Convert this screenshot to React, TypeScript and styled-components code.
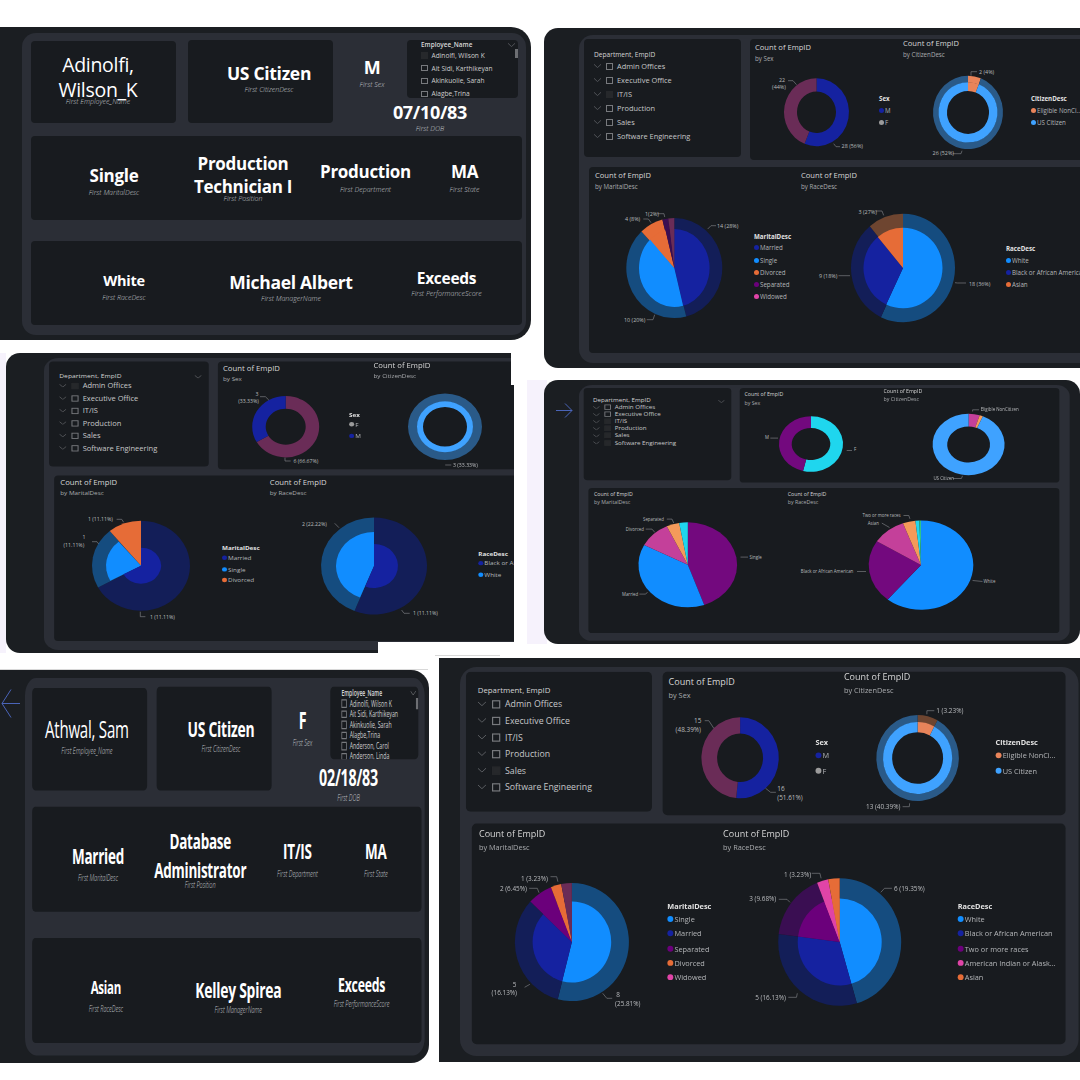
import React from "react";
import styled, { createGlobalStyle } from "styled-components";

const GlobalStyle = createGlobalStyle`
  html, body { margin: 0; padding: 0; background: #fff; }
  * { box-sizing: border-box; }
`;

const FONT = `"Open Sans", "Noto Sans", "Liberation Sans", sans-serif`;

// ---- shared shell -----------------------------------------------------------

const Canvas = styled.div`
  position: relative;
  width: 1080px;
  height: 1080px;
  overflow: hidden;
  background: #fff;
  font-family: ${FONT};
`;

// every screenshot is a window pinned on the collage
const Shot = styled.section<{ $x: number; $y: number; $w: number; $h: number; $corners: string }>`
  position: absolute;
  left: ${(p) => p.$x}px;
  top: ${(p) => p.$y}px;
  width: ${(p) => p.$w}px;
  height: ${(p) => p.$h}px;
  display: flex;
  align-items: flex-start;
  overflow: hidden;
  background: #1b1e22;
  border-radius: ${(p) => p.$corners};
`;

const Gutter = styled.div<{ $w: number; $top: number; $arrowTop?: number; $arrowLeft?: number }>`
  flex: none;
  width: ${(p) => p.$w}px;
  margin-top: ${(p) => p.$top}px;
  padding-top: ${(p) => p.$arrowTop ?? 0}px;
  padding-left: ${(p) => p.$arrowLeft ?? 0}px;
  svg { display: block; }
`;

// the captures were stretched unevenly, so the page keeps one base size and is scaled
const ScaledPage = styled.div<{ $w: number; $h: number; $sx: number; $sy: number; $top: number }>`
  flex: none;
  width: ${(p) => p.$w}px;
  height: ${(p) => p.$h}px;
  margin-top: ${(p) => p.$top}px;
  background: #2b2e36;
  border-radius: 14px;
  transform-origin: 0 0;
  transform: scale(${(p) => p.$sx}, ${(p) => p.$sy});
`;

const Patch = styled.div<{ $x: number; $y: number; $w: number; $h: number; $c: string }>`
  position: absolute;
  left: ${(p) => p.$x}px;
  top: ${(p) => p.$y}px;
  width: ${(p) => p.$w}px;
  height: ${(p) => p.$h}px;
  background: ${(p) => p.$c};
`;

const Card = styled.div`
  background: #181b1f;
  border-radius: 4px;
`;

const Chevron = () => (
  <svg width="7" height="4" viewBox="0 0 7 4" fill="none" stroke="#77797d" strokeWidth="0.6">
    <path d="M0 0.3L3.5 3.6L7 0.3" />
  </svg>
);

const Tick = styled.span<{ $filled?: boolean; $size: number }>`
  flex: none;
  width: ${(p) => p.$size}px;
  height: ${(p) => p.$size}px;
  border: 0.6px solid ${(p) => (p.$filled ? "#26282b" : "#77797d")};
  background: ${(p) => (p.$filled ? "#26282b" : "transparent")};
`;

// ---- employee page ----------------------------------------------------------

const EmpColumn = styled.div`
  padding: 8px 4px 0 9px;
`;

const TopRow = styled.div`
  display: flex;
  height: 95px;
`;

const TopCard = styled(Card)<{ $raise?: boolean; $gap?: number }>`
  flex: none;
  width: 145px;
  height: ${(p) => (p.$raise ? 83 : 82)}px;
  margin-top: ${(p) => (p.$raise ? -1 : 0)}px;
  margin-left: ${(p) => p.$gap ?? 0}px;
`;

const KpiRow = styled.div<{ $columns: string }>`
  display: grid;
  grid-template-columns: ${(p) => p.$columns};
  height: 100%;
`;

const KpiCell = styled.div<{ $top: number }>`
  display: flex;
  flex-direction: column;
  align-items: center;
  min-width: 0;
  padding-top: ${(p) => p.$top}px;
`;

const KpiValue = styled.div<{ $size: number; $lh: number; $weight: number }>`
  color: #fff;
  font-size: ${(p) => p.$size}px;
  line-height: ${(p) => p.$lh}px;
  font-weight: ${(p) => p.$weight};
  letter-spacing: -0.3px;
  text-align: center;
  white-space: nowrap;
`;

const KpiLabel = styled.div<{ $gap: number }>`
  margin-top: ${(p) => p.$gap}px;
  color: #c4c7cc;
  font-size: 7px;
  line-height: 9px;
  font-style: italic;
  font-weight: 300;
  white-space: nowrap;
`;

const SideBlock = styled.div`
  flex: none;
  width: 189px;
  margin-top: -1px;
`;

const SideTop = styled.div`
  display: flex;
  height: 58px;
`;

const SexCell = styled.div`
  flex: none;
  width: 54px;
  margin: 0 8px 0 12px;
`;

const EmpSlicer = styled(Card)`
  position: relative;
  flex: none;
  width: 111px;
  height: 58px;
  overflow: hidden;
  padding: 1px 0 0 14px;
`;

const EmpSlicerTitle = styled.div`
  color: #d8d8d8;
  font-size: 6.4px;
  line-height: 8px;
  font-weight: 600;
`;

const EmpSlicerRow = styled.div<{ $h: number }>`
  display: flex;
  align-items: center;
  gap: 4px;
  height: ${(p) => p.$h}px;
  color: #cfcfcf;
  font-size: 6.6px;
  white-space: nowrap;
`;

const EmpScrollThumb = styled.div`
  position: absolute;
  right: 0;
  top: 9px;
  width: 3px;
  height: 9px;
  background: #6d6f73;
`;

const EmpSlicerChevron = styled.div`
  position: absolute;
  right: 3px;
  top: 1px;
  line-height: 0;
`;

const DateCell = styled.div`
  width: 194px;
  margin-top: 3px;
`;

const WideCard = styled(Card)<{ $mt: number }>`
  width: 491px;
  height: 84px;
  margin-top: ${(p) => p.$mt}px;
`;

type Kpi = {
  lines: string[];
  label: string;
  center?: number;
  top: number;
  size?: number;
  lh?: number;
  weight?: number;
  gap: number;
};

const columnsFromCenters = (centers: number[]) => {
  let end = 0;
  return centers
    .map((c) => {
      const w = (c - end) * 2;
      end += w;
      return `${w}px`;
    })
    .join(" ");
};

const KpiBlock = ({ k }: { k: Kpi }) => (
  <KpiCell $top={k.top}>
    <KpiValue $size={k.size ?? 17} $lh={k.lh ?? 22} $weight={k.weight ?? 700}>
      {k.lines.map((l) => (
        <div key={l}>{l}</div>
      ))}
    </KpiValue>
    <KpiLabel $gap={k.gap}>{k.label}</KpiLabel>
  </KpiCell>
);

const KpiGroup = ({ items }: { items: Kpi[] }) => (
  <KpiRow $columns={columnsFromCenters(items.map((k) => k.center ?? 0))}>
    {items.map((k) => (
      <KpiBlock key={k.label} k={k} />
    ))}
  </KpiRow>
);

const EMPLOYEES = [
  "Adinolfi, Wilson K",
  "Ait Sidi, Karthikeyan",
  "Akinkuolie, Sarah",
  "Alagbe,Trina",
  "Anderson, Carol",
  "Anderson, Linda",
];

type EmployeeData = {
  name: Kpi;
  citizen: string;
  sex: string;
  dob: string;
  marital: string;
  position: string[];
  dept: string;
  state: string;
  race: string;
  manager: string;
  score: string;
  slicerRow: number;
  firstFilled?: boolean;
};

const EmployeePage = ({ d }: { d: EmployeeData }) => (
  <EmpColumn>
    <TopRow>
      <TopCard>
        <KpiGroup items={[d.name]} />
      </TopCard>
      <TopCard $raise $gap={12}>
        <KpiGroup items={[{ lines: [d.citizen], label: "First CitizenDesc", center: 81, top: 22, size: 17.5, gap: 1 }]} />
      </TopCard>
      <SideBlock>
        <SideTop>
          <SexCell>
            <KpiBlock k={{ lines: [d.sex], label: "First Sex", top: 16, size: 18, gap: 1.5 }} />
          </SexCell>
          <EmpSlicer>
            <EmpSlicerTitle>Employee_Name</EmpSlicerTitle>
            {EMPLOYEES.map((name, i) => (
              <EmpSlicerRow key={name} $h={d.slicerRow}>
                <Tick $size={6.5} $filled={d.firstFilled && i === 0} />
                {name}
              </EmpSlicerRow>
            ))}
            <EmpSlicerChevron>
              <Chevron />
            </EmpSlicerChevron>
            <EmpScrollThumb />
          </EmpSlicer>
        </SideTop>
        <DateCell>
          <KpiBlock k={{ lines: [d.dob], label: "First DOB", top: 0, size: 18, gap: 1 }} />
        </DateCell>
      </SideBlock>
    </TopRow>
    <WideCard $mt={0}>
      <KpiGroup
        items={[
          { lines: [d.marital], label: "First MaritalDesc", center: 83, top: 29, gap: 1 },
          { lines: d.position, label: "First Position", center: 212, top: 16, lh: 23, gap: -4 },
          { lines: [d.dept], label: "First Department", center: 334.5, top: 25, gap: 1.5 },
          { lines: [d.state], label: "First State", center: 433.5, top: 25, gap: 1.5 },
        ]}
      />
    </WideCard>
    <WideCard $mt={21}>
      <KpiGroup
        items={[
          { lines: [d.race], label: "First RaceDesc", center: 93, top: 30, size: 14.5, lh: 20, gap: 1.5 },
          { lines: [d.manager], label: "First ManagerName", center: 260, top: 29.5, size: 17.5, gap: 1.8 },
          { lines: [d.score], label: "First PerformanceScore", center: 415.5, top: 27, size: 15.5, lh: 20, gap: 1.2 },
        ]}
      />
    </WideCard>
  </EmpColumn>
);

const WILSON: EmployeeData = {
  name: { lines: ["Adinolfi,", "Wilson_K"], label: "First Employee_Name", center: 67, top: 10.5, size: 19.5, lh: 25, weight: 400, gap: -5 },
  citizen: "US Citizen",
  sex: "M",
  dob: "07/10/83",
  marital: "Single",
  position: ["Production", "Technician I"],
  dept: "Production",
  state: "MA",
  race: "White",
  manager: "Michael Albert",
  score: "Exceeds",
  slicerRow: 12.8,
  firstFilled: true,
};

const SAM: EmployeeData = {
  name: { lines: ["Athwal, Sam"], label: "First Employee_Name", center: 69, top: 21, size: 19, lh: 25, weight: 400, gap: 0 },
  citizen: "US Citizen",
  sex: "F",
  dob: "02/18/83",
  marital: "Married",
  position: ["Database", "Administrator"],
  dept: "IT/IS",
  state: "MA",
  race: "Asian",
  manager: "Kelley Spirea",
  score: "Exceeds",
  slicerRow: 8.5,
};

// ---- chart page -------------------------------------------------------------

const C = {
  blue: "#1522a0",
  blueDim: "#131e58",
  sky: "#118dff",
  skyDim: "#154c7f",
  orange: "#e66c37",
  purple: "#6b007b",
  purpleDim: "#3a0e52",
  plum: "#6a2c57",
  pink: "#e044a7",
  peach: "#e8845a",
  brown: "#6e4530",
  ring: "#2a5a88",
  ringIn: "#3fa2ff",
  grey: "#9b9b9b",
  cyan: "#1fd6ee",
  vivid: "#73097e",
  rose: "#c4409a",
  apricot: "#f49a5a",
};

type Ring = { rx: number; ry: number; hx?: number; hy?: number; slices: [number, string | null][] };
type Note = { text: string; x: number; y: number; line?: string; anchor?: "middle" };
type Drawing = { cx: number; cy: number; rings: Ring[]; notes: Note[] };
type LegendData = { title: string; items: [string, string][] };
type Chart = { sub: string; drawing: Drawing; legend?: LegendData; svgW?: number };

type ChartPageData = {
  ox: number;
  oy: number;
  sx: number;
  sy: number;
  titleSize: number;
  subSize: number;
  noteSize: number;
  rowH: number;
  itemSize: number;
  filled: number[];
  headChevron?: boolean;
  sex: Chart;
  citizen: Chart;
  marital: Chart;
  race: Chart;
};

const polar = (cx: number, cy: number, rx: number, ry: number, turn: number) => {
  const a = turn * Math.PI * 2;
  return `${(cx + rx * Math.sin(a)).toFixed(2)} ${(cy - ry * Math.cos(a)).toFixed(2)}`;
};

const slicePath = (cx: number, cy: number, r: Ring, a0: number, a1: number): string => {
  // arcs stay below half a turn so the small-arc flag holds
  if (a1 - a0 > 0.45) {
    const mid = (a0 + a1) / 2;
    return slicePath(cx, cy, r, a0, mid) + slicePath(cx, cy, r, mid, a1);
  }
  const hx = r.hx ?? 0;
  const hy = r.hy ?? 0;
  const outer = `M${polar(cx, cy, r.rx, r.ry, a0)}A${r.rx} ${r.ry} 0 0 1 ${polar(cx, cy, r.rx, r.ry, a1)}`;
  if (!hx) return `${outer}L${cx} ${cy}Z`;
  return `${outer}L${polar(cx, cy, hx, hy, a1)}A${hx} ${hy} 0 0 0 ${polar(cx, cy, hx, hy, a0)}Z`;
};

// the drawing is written in picture coordinates: the viewBox undoes the page scale
const PieDrawing = ({ d, box, size }: { d: Drawing; box: number[]; size: number }) => (
  <PieSvg
    $w={box[4]}
    $h={box[5]}
    viewBox={`${box[0]} ${box[1]} ${box[2]} ${box[3]}`}
    preserveAspectRatio="none"
  >
    {d.rings.map((r, i) => {
      let at = 0;
      return (
        <g key={i}>
          {r.slices.map(([f, color], j) => {
            const a0 = at;
            at += f;
            return color ? <path key={j} d={slicePath(d.cx, d.cy, r, a0, at)} fill={color} /> : null;
          })}
        </g>
      );
    })}
    {d.notes.map((n) => (
      <g key={n.text + n.x}>
        {n.line && <path d={n.line} fill="none" stroke="#8a8c90" strokeWidth="0.6" />}
        <text x={n.x} y={n.y} fontSize={size} fill="#b9bbbe" dominantBaseline="central" textAnchor={n.anchor ?? "start"}>
          {n.text}
        </text>
      </g>
    ))}
  </PieSvg>
);

const PieSvg = styled.svg<{ $w: number; $h: number }>`
  flex: none;
  display: block;
  overflow: visible;
  width: ${(p) => p.$w}px;
  height: ${(p) => p.$h}px;
  font-family: ${FONT};
`;

const ChartsColumn = styled.div`
  padding: 4px 0 0 5px;
`;

const ChartsTop = styled.div`
  display: flex;
  gap: 9px;
`;

const DeptSlicer = styled(Card)`
  position: relative;
  flex: none;
  width: 157px;
  height: 118px;
  padding: 11px 0 0 10px;
`;

const DeptTitle = styled.div`
  color: #d4d4d4;
  font-size: 6.6px;
  line-height: 9px;
`;

const DeptRow = styled.div<{ $h: number; $size: number }>`
  display: flex;
  align-items: center;
  height: ${(p) => p.$h}px;
  color: #c6c7c9;
  font-size: ${(p) => p.$size}px;
  white-space: nowrap;
`;

const RowChevron = styled.span`
  flex: none;
  display: flex;
  width: 12px;
`;

const RowText = styled.span`
  margin-left: 4px;
`;

const DeptHeadChevron = styled.div`
  position: absolute;
  right: 7px;
  top: 13px;
  line-height: 0;
`;

const ChartCard = styled(Card)<{ $w: number; $h: number; $pad: number; $ml?: number; $mt?: number }>`
  flex: none;
  display: flex;
  width: ${(p) => p.$w}px;
  height: ${(p) => p.$h}px;
  padding-left: ${(p) => p.$pad}px;
  margin-left: ${(p) => p.$ml ?? 0}px;
  margin-top: ${(p) => p.$mt ?? 0}px;
`;

const ChartBlock = styled.div<{ $w: number }>`
  flex: none;
  width: ${(p) => p.$w}px;
`;

const ChartHead = styled.div<{ $h: number; $raised?: boolean }>`
  height: ${(p) => p.$h}px;
  padding-top: ${(p) => (p.$raised ? 0 : 4)}px;
`;

const ChartTitle = styled.div<{ $size: number }>`
  color: #d6d6d6;
  font-size: ${(p) => p.$size}px;
  line-height: 9px;
  white-space: nowrap;
`;

const ChartSub = styled.div<{ $size: number }>`
  margin-top: 2px;
  color: #a9abae;
  font-size: ${(p) => p.$size}px;
  line-height: 9px;
  white-space: nowrap;
`;

const ChartBody = styled.div<{ $h: number }>`
  display: flex;
  height: ${(p) => p.$h}px;
`;

const Legend = styled.div`
  flex: none;
  align-self: center;
`;

const LegendTitle = styled.div`
  color: #e2e2e2;
  font-size: 6.2px;
  line-height: 10px;
  font-weight: 700;
  white-space: nowrap;
`;

const LegendRow = styled.div`
  display: flex;
  align-items: center;
  gap: 1px;
  height: 12.2px;
  color: #b4b6b9;
  font-size: 6.2px;
  white-space: nowrap;
`;

const LegendDot = styled.span<{ $c: string }>`
  flex: none;
  width: 5px;
  height: 5px;
  border-radius: 50%;
  background: ${(p) => p.$c};
`;

const DEPARTMENTS = ["Admin Offices", "Executive Office", "IT/IS", "Production", "Sales", "Software Engineering"];

const BASE_X = 579;
const BASE_Y = 36;

const ChartUnit = ({
  c,
  p,
  rect,
  raised,
  headH,
  w,
}: {
  c: Chart;
  p: ChartPageData;
  rect: [number, number, number, number];
  raised?: boolean;
  headH: number;
  w: number;
}) => {
  const svgW = c.svgW ?? rect[2];
  const box = [
    p.ox + (rect[0] - BASE_X) * p.sx,
    p.oy + (rect[1] - BASE_Y) * p.sy,
    svgW * p.sx,
    rect[3] * p.sy,
    svgW,
    rect[3],
  ];
  return (
    <ChartBlock $w={w}>
      <ChartHead $h={headH} $raised={raised}>
        <ChartTitle $size={p.titleSize}>Count of EmpID</ChartTitle>
        <ChartSub $size={p.subSize}>{c.sub}</ChartSub>
      </ChartHead>
      <ChartBody $h={rect[3]}>
        <PieDrawing d={c.drawing} box={box} size={p.noteSize} />
        {c.legend && (
          <Legend>
            <LegendTitle>{c.legend.title}</LegendTitle>
            {c.legend.items.map(([label, color]) => (
              <LegendRow key={label}>
                <LegendDot $c={color} />
                {label}
              </LegendRow>
            ))}
          </Legend>
        )}
      </ChartBody>
    </ChartBlock>
  );
};

const ChartsPage = ({ p }: { p: ChartPageData }) => (
  <ChartsColumn>
    <ChartsTop>
      <DeptSlicer>
        <DeptTitle>Department, EmpID</DeptTitle>
        {DEPARTMENTS.map((name, i) => (
          <DeptRow key={name} $h={p.rowH} $size={p.itemSize}>
            <RowChevron>
              <Chevron />
            </RowChevron>
            <Tick $size={7} $filled={p.filled.includes(i)} />
            <RowText>{name}</RowText>
          </DeptRow>
        ))}
        {p.headChevron && (
          <DeptHeadChevron>
            <Chevron />
          </DeptHeadChevron>
        )}
      </DeptSlicer>
      <ChartCard $w={340} $h={121} $pad={5}>
        <ChartUnit c={p.sex} p={p} rect={[755, 68, 124, 88]} headH={28} w={148} />
        <ChartUnit c={p.citizen} p={p} rect={[903, 68, 128, 88]} headH={28} w={187} raised />
      </ChartCard>
    </ChartsTop>
    <ChartCard $w={501} $h={186} $pad={6} $ml={5} $mt={7}>
      <ChartUnit c={p.marital} p={p} rect={[595, 194, 159, 148]} headH={26} w={206} />
      <ChartUnit c={p.race} p={p} rect={[801, 194, 205, 148]} headH={26} w={289} />
    </ChartCard>
  </ChartsColumn>
);

const PANEL_TOP_RIGHT: ChartPageData = {
  ox: 579,
  oy: 35.3,
  sx: 1,
  sy: 1,
  titleSize: 7.6,
  subSize: 6.2,
  noteSize: 5.4,
  rowH: 14,
  itemSize: 7.4,
  filled: [2],
  sex: {
    sub: "by Sex",
    drawing: {
      cx: 816.5,
      cy: 112.5,
      rings: [{ rx: 32.5, ry: 34, hx: 19.5, hy: 20.8, slices: [[0.56, C.blue], [0.44, C.plum]] }],
      notes: [
        { text: "22", x: 782, y: 80, anchor: "middle" },
        { text: "(44%)", x: 779, y: 87, anchor: "middle", line: "M788 81H793L796.5 85" },
        { text: "28 (56%)", x: 841.6, y: 146.7, line: "M833.7 144L836 147H840" },
      ],
    },
    legend: { title: "Sex", items: [["M", C.blue], ["F", C.grey]] },
  },
  citizen: {
    sub: "by CitizenDesc",
    drawing: {
      cx: 968,
      cy: 112.7,
      rings: [
        { rx: 35, ry: 36.7, hx: 29.3, hy: 30, slices: [[0.06, C.peach], [0.94, C.ring]] },
        { rx: 29.5, ry: 30.2, hx: 21, hy: 21.5, slices: [[0.06, C.peach], [0.94, C.ringIn]] },
      ],
      notes: [
        { text: "2 (4%)", x: 979, y: 72, line: "M971 76V72H977" },
        { text: "26 (52%)", x: 932.6, y: 153.7, line: "M953 154H961L962 151" },
      ],
    },
    legend: { title: "CitizenDesc", items: [["Eligible NonCi...", C.peach], ["US Citizen", C.ringIn]] },
  },
  marital: {
    sub: "by MaritalDesc",
    drawing: {
      cx: 674.3,
      cy: 268.3,
      rings: [
        { rx: 48, ry: 50, slices: [[0.46, C.blueDim], [0.42, C.skyDim], [0.08, C.orange], [0.02, C.purpleDim], [0.02, C.plum]] },
        { rx: 35.3, ry: 39, slices: [[0.46, C.blue], [0.42, C.sky], [0.08, C.orange], [0.02, C.purpleDim], [0.02, C.plum]] },
      ],
      notes: [
        { text: "14 (28%)", x: 717, y: 226.7, line: "M707.7 229.3L711 226H716" },
        { text: "10 (20%)", x: 624, y: 320, line: "M654.7 315L653 320H646.7" },
        { text: "4 (8%)", x: 625, y: 219, line: "M643.3 219.3H648.4L651 223" },
        { text: "1(2%)", x: 645, y: 214, line: "M657 214H664L664.7 217.3" },
      ],
    },
    legend: {
      title: "MaritalDesc",
      items: [["Married", C.blue], ["Single", C.sky], ["Divorced", C.orange], ["Separated", C.purple], ["Widowed", C.pink]],
    },
  },
  race: {
    sub: "by RaceDesc",
    drawing: {
      cx: 903,
      cy: 268.3,
      rings: [
        { rx: 52, ry: 54.3, slices: [[0.57, C.skyDim], [0.32, C.blueDim], [0.11, C.brown]] },
        { rx: 39.5, ry: 40.3, slices: [[0.57, C.sky], [0.32, C.blue], [0.11, C.orange]] },
      ],
      notes: [
        { text: "3 (27%)", x: 858.5, y: 212, line: "M875.7 211.3H882L883.7 215.7" },
        { text: "9 (18%)", x: 819, y: 276, line: "M838.5 276H850" },
        { text: "18 (36%)", x: 969, y: 284, line: "M955 283L957.4 283.3H966" },
      ],
    },
    legend: { title: "RaceDesc", items: [["White", C.sky], ["Black or African American", C.blue], ["Asian", C.orange]] },
  },
};

const PANEL_MID_LEFT: ChartPageData = {
  ox: 44,
  oy: 358,
  sx: 1.017,
  sy: 0.89,
  titleSize: 7.6,
  subSize: 6.2,
  noteSize: 5.2,
  rowH: 14,
  itemSize: 7.4,
  filled: [0],
  headChevron: true,
  sex: {
    sub: "by Sex",
    drawing: {
      cx: 285.7,
      cy: 426.7,
      rings: [{ rx: 33.5, ry: 30.7, hx: 20, hy: 18, slices: [[0.6667, C.plum], [0.3333, C.blue]] }],
      notes: [
        { text: "3", x: 257, y: 394, anchor: "middle" },
        { text: "(33.33%)", x: 248.5, y: 400.7, anchor: "middle", line: "M260 396.7H265.4L268.8 400" },
        { text: "6 (66.67%)", x: 293.4, y: 461, line: "M285 457.7V461H290.7" },
      ],
    },
    legend: { title: "Sex", items: [["F", C.grey], ["M", C.blue]] },
  },
  citizen: {
    sub: "by CitizenDesc",
    drawing: {
      cx: 445,
      cy: 426.7,
      rings: [
        { rx: 37, ry: 33.3, hx: 27.5, hy: 25, slices: [[1, C.ring]] },
        { rx: 28, ry: 25.5, hx: 22, hy: 19.7, slices: [[1, C.ringIn]] },
      ],
      notes: [{ text: "3 (33.33%)", x: 453, y: 465, line: "M445.2 465H451.3" }],
    },
  },
  marital: {
    sub: "by MaritalDesc",
    drawing: {
      cx: 141,
      cy: 565.7,
      rings: [
        { rx: 49, ry: 45, slices: [[0.67, C.blueDim], [0.22, C.skyDim], [0.11, C.orange]] },
        { rx: 35, ry: 31, slices: [[0.67, null], [0.22, C.sky]] },
        { rx: 20, ry: 18, slices: [[0.67, C.blue]] },
      ],
      notes: [
        { text: "1 (11.11%)", x: 88, y: 519, line: "M116.6 519.3H121.7L123.7 522.3" },
        { text: "1", x: 84, y: 536.7, anchor: "middle" },
        { text: "(11.11%)", x: 63.6, y: 545, line: "M92 541.7H97L98.7 544" },
        { text: "1 (11.11%)", x: 150, y: 616.7, line: "M140.3 611.7V616.7H145.4" },
      ],
    },
    legend: { title: "MaritalDesc", items: [["Married", C.blue], ["Single", C.sky], ["Divorced", C.orange]] },
  },
  race: {
    sub: "by RaceDesc",
    drawing: {
      cx: 374,
      cy: 566,
      rings: [
        { rx: 53, ry: 48.5, slices: [[0.56, C.blueDim], [0.44, C.skyDim]] },
        { rx: 38, ry: 34, slices: [[0.56, null], [0.44, C.sky]] },
        { rx: 24, ry: 22, slices: [[0.56, C.blue]] },
      ],
      notes: [
        { text: "2 (22.22%)", x: 302, y: 524, line: "M334.7 523.3L339 527.7" },
        { text: "1 (11.11%)", x: 413, y: 613, line: "M401.6 610L404 613.3H409.7" },
      ],
    },
    legend: { title: "RaceDesc", items: [["Black or African American", C.blue], ["White", C.sky]] },
  },
};

const PANEL_MID_RIGHT: ChartPageData = {
  ox: 579,
  oy: 385.2,
  sx: 0.94,
  sy: 0.78,
  titleSize: 5.6,
  subSize: 5.6,
  noteSize: 4.4,
  rowH: 9.1,
  itemSize: 6.6,
  filled: [2, 3, 4, 5],
  headChevron: true,
  sex: {
    sub: "by Sex",
    drawing: {
      cx: 811,
      cy: 444.2,
      rings: [{ rx: 32, ry: 27.8, hx: 19.3, hy: 16, slices: [[0.54, C.cyan], [0.46, C.vivid]] }],
      notes: [
        { text: "F", x: 854, y: 449.7, line: "M846.7 450.7H852" },
        { text: "M", x: 765, y: 437.7, line: "M770.3 438.3H778" },
      ],
    },
  },
  citizen: {
    sub: "by CitizenDesc",
    drawing: {
      cx: 968.6,
      cy: 444.7,
      rings: [{ rx: 36, ry: 30.7, hx: 21.4, hy: 18, slices: [[0.05, C.rose], [0.015, C.apricot], [0.935, C.ringIn]] }],
      notes: [
        { text: "Eligible NonCitizen", x: 980.7, y: 409.7, line: "M972.6 411.7V410H979" },
        { text: "US Citizen", x: 933.4, y: 478.7, line: "M952.7 478.7H961.4L962.5 476" },
      ],
    },
  },
  marital: {
    sub: "by MaritalDesc",
    drawing: {
      cx: 687.8,
      cy: 565,
      rings: [{ rx: 49.3, ry: 42.5, slices: [[0.446, C.vivid], [0.381, C.sky], [0.103, C.rose], [0.042, C.apricot], [0.028, C.cyan]] }],
      notes: [
        { text: "Single", x: 749.6, y: 557, line: "M740.5 557.3H748" },
        { text: "Married", x: 622, y: 594.7, line: "M639.4 594.3H645.7L647.5 592.3" },
        { text: "Divorced", x: 625.8, y: 529, line: "M645.7 529.3H652L654.9 532.7" },
        { text: "Separated", x: 643, y: 519, line: "M666.8 519.3H672L673.8 523.3" },
      ],
    },
  },
  race: {
    sub: "by RaceDesc",
    drawing: {
      cx: 921,
      cy: 565.3,
      rings: [{ rx: 52.3, ry: 44.7, slices: [[0.61, C.sky], [0.23, C.vivid], [0.104, C.rose], [0.039, C.apricot], [0.012, C.cyan], [0.005, "#2fc48a"]] }],
      notes: [
        { text: "White", x: 983.5, y: 581.7, line: "M972.6 580.7L982.5 581.7" },
        { text: "Black or African American", x: 800.8, y: 571.7, line: "M857 571.7H866" },
        { text: "Asian", x: 867.8, y: 523, line: "M881.8 523.3L889.5 527.7" },
        { text: "Two or more races", x: 862.5, y: 515.7, line: "M903.5 515.7H908.8L909.9 519" },
      ],
    },
  },
};

const PANEL_BOTTOM_RIGHT: ChartPageData = {
  ox: 459.7,
  oy: 667,
  sx: 1.185,
  sy: 1.186,
  titleSize: 7.6,
  subSize: 6.2,
  noteSize: 6.4,
  rowH: 14,
  itemSize: 7.4,
  filled: [4],
  sex: {
    sub: "by Sex",
    drawing: {
      cx: 739.8,
      cy: 757.8,
      rings: [{ rx: 38.7, ry: 40.5, hx: 23, hy: 24.2, slices: [[0.5161, C.blue], [0.4839, C.plum]] }],
      notes: [
        { text: "15", x: 697.4, y: 720.7, anchor: "middle" },
        { text: "(48.39%)", x: 688, y: 729.7, anchor: "middle", line: "M704.4 720.7H708.5L713.5 728.3" },
        { text: "16", x: 777, y: 788 },
        { text: "(51.61%)", x: 777, y: 797.3, line: "M765.3 788.3L770.3 792.3H775.6" },
      ],
    },
    legend: { title: "Sex", items: [["M", C.blue], ["F", C.grey]] },
  },
  citizen: {
    sub: "by CitizenDesc",
    drawing: {
      cx: 917.3,
      cy: 758,
      rings: [
        { rx: 41.3, ry: 43, hx: 34.4, hy: 35.8, slices: [[0.08, C.brown], [0.92, C.ring]] },
        { rx: 34.6, ry: 36, hx: 25.5, hy: 25.8, slices: [[0.08, C.peach], [0.92, C.ringIn]] },
      ],
      notes: [
        { text: "1 (3.23%)", x: 936, y: 710.7, line: "M926.6 714.3V710.7H934" },
        { text: "13 (40.39%)", x: 865.7, y: 806.7, line: "M902.3 806.7H909L909.3 803.3" },
      ],
    },
    legend: { title: "CitizenDesc", items: [["Eligible NonCi...", C.peach], ["US Citizen", C.ringIn]] },
  },
  marital: {
    sub: "by MaritalDesc",
    drawing: {
      cx: 571.6,
      cy: 942,
      rings: [
        { rx: 57, ry: 59, slices: [[0.54, C.skyDim], [0.33, C.blueDim], [0.07, C.purple], [0.03, C.orange], [0.03, C.plum]] },
        { rx: 39.3, ry: 40.5, slices: [[0.54, C.sky], [0.33, C.blue], [0.07, C.purple], [0.03, C.orange], [0.03, C.plum]] },
      ],
      notes: [
        { text: "1 (3.23%)", x: 520.6, y: 878.3, line: "M550.2 876.7H556.4L557.6 881.7" },
        { text: "2 (6.45%)", x: 499.6, y: 888.3, line: "M528.8 888.3H537L538.7 892.7" },
        { text: "5", x: 514.4, y: 984, anchor: "middle", line: "M524.3 987.3L529.6 984.3" },
        { text: "(16.13%)", x: 504, y: 992.7, anchor: "middle" },
        { text: "8", x: 616, y: 994, line: "M602.4 993.3L606.5 998.3H611.9" },
        { text: "(25.81%)", x: 614.8, y: 1003.3 },
      ],
    },
    legend: {
      title: "MaritalDesc",
      items: [["Single", C.sky], ["Married", C.blue], ["Separated", C.purple], ["Divorced", C.orange], ["Widowed", C.pink]],
    },
  },
  race: {
    sub: "by RaceDesc",
    svgW: 198,
    drawing: {
      cx: 839.4,
      cy: 942,
      rings: [
        { rx: 61.5, ry: 63.8, slices: [[0.455, C.skyDim], [0.315, C.blueDim], [0.17, C.purpleDim], [0.03, C.pink], [0.03, C.orange]] },
        { rx: 42, ry: 43.5, slices: [[0.455, C.sky], [0.315, C.blue], [0.17, C.purple], [0.03, C.pink], [0.03, C.orange]] },
      ],
      notes: [
        { text: "1 (3.23%)", x: 783.8, y: 874.3, line: "M811.4 873.3H819.6L820.8 878.3" },
        { text: "3 (9.68%)", x: 749, y: 898.7, line: "M778.5 899.3H786.7L789.6 902.3" },
        { text: "5 (16.13%)", x: 755, y: 997.3, line: "M788 997.3H796.2L797 993.3" },
        { text: "6 (19.35%)", x: 893.7, y: 888.3, line: "M880.5 892.3L884.2 888.3H891.6" },
      ],
    },
    legend: {
      title: "RaceDesc",
      items: [
        ["White", C.sky],
        ["Black or African American", C.blue],
        ["Two or more races", C.purple],
        ["American Indian or Alask...", C.pink],
        ["Asian", C.orange],
      ],
    },
  },
};

const RightArrow = () => (
  <svg width="17" height="15" viewBox="0 0 17 15" fill="none" stroke="#4a64b8" strokeWidth="1">
    <path d="M0 7.5H16M9 0.5L16 7.5L9 14.5" />
  </svg>
);

const LeftArrow = () => (
  <svg width="19" height="29" viewBox="0 0 19 29" fill="none" stroke="#4a64b8" strokeWidth="1">
    <path d="M19 14.5H1M10 0.5L1 14.5L10 28.5" />
  </svg>
);

export default function App() {
  return (
    <Canvas>
      <GlobalStyle />
      <Patch $x={0} $y={353} $w={6} $h={300} $c="#f6f2fc" />
      <Patch $x={527} $y={380} $w={20} $h={264} $c="#f6f2fc" />
      <Patch $x={435} $y={655} $w={65} $h={1} $c="#d8d8d8" />
      <Patch $x={0} $y={669} $w={428} $h={1} $c="#d8d8d8" />

      <Shot $x={0} $y={27} $w={531} $h={313} $corners="0 20px 20px 0">
        <Gutter $w={22} $top={6} />
        <ScaledPage $w={504} $h={302} $sx={1} $sy={1} $top={6}>
          <EmployeePage d={WILSON} />
        </ScaledPage>
      </Shot>

      <Shot $x={544} $y={28} $w={536} $h={340} $corners="14px 0 0 14px">
        <Gutter $w={35} $top={7} />
        <ScaledPage $w={522} $h={328} $sx={1} $sy={1} $top={7.3}>
          <ChartsPage p={PANEL_TOP_RIGHT} />
        </ScaledPage>
      </Shot>

      <Shot $x={6} $y={353} $w={508} $h={300} $corners="14px 0 0 14px">
        <Gutter $w={38} $top={5} />
        <ScaledPage $w={522} $h={328} $sx={1.017} $sy={0.89} $top={5}>
          <ChartsPage p={PANEL_MID_LEFT} />
        </ScaledPage>
      </Shot>
      <Patch $x={511} $y={353} $w={3} $h={32} $c="#fff" />
      <Patch $x={378} $y={642} $w={136} $h={13} $c="#fff" />

      <Shot $x={544} $y={380} $w={536} $h={264} $corners="14px 14px 14px 14px">
        <Gutter $w={35} $top={5.2} $arrowTop={18} $arrowLeft={12} >
          <RightArrow />
        </Gutter>
        <ScaledPage $w={522} $h={328} $sx={0.94} $sy={0.78} $top={5.2}>
          <ChartsPage p={PANEL_MID_RIGHT} />
        </ScaledPage>
      </Shot>

      <Shot $x={0} $y={670} $w={429} $h={393} $corners="0 18px 18px 0">
        <Gutter $w={25} $top={8} $arrowTop={11} $arrowLeft={1}>
          <LeftArrow />
        </Gutter>
        <ScaledPage $w={504} $h={302} $sx={0.793} $sy={1.25} $top={8}>
          <EmployeePage d={SAM} />
        </ScaledPage>
      </Shot>

      <Shot $x={439} $y={658} $w={641} $h={404} $corners="0">
        <Gutter $w={20.7} $top={9} />
        <ScaledPage $w={522} $h={328} $sx={1.185} $sy={1.186} $top={9}>
          <ChartsPage p={PANEL_BOTTOM_RIGHT} />
        </ScaledPage>
      </Shot>
    </Canvas>
  );
}
